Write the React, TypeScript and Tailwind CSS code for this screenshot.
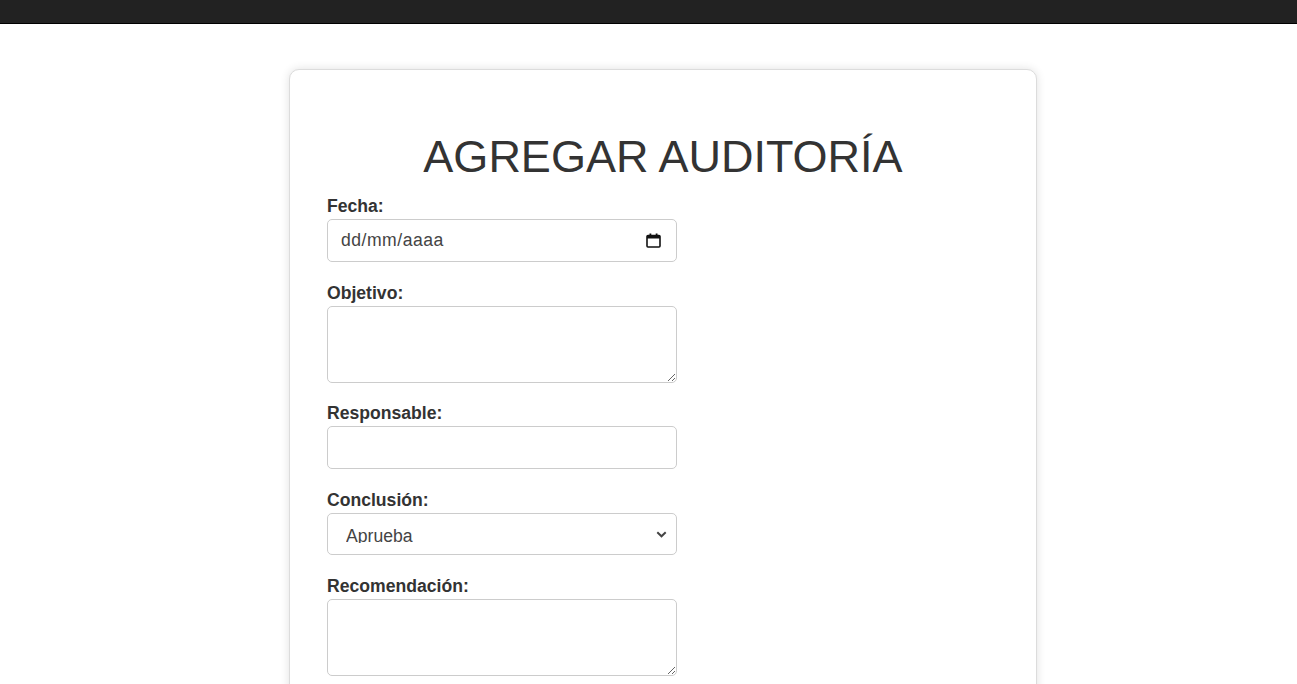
import React from 'react';

const font = { fontFamily: '"Liberation Sans", Arial, sans-serif' };

function Field({ label, children, tight }: { label: string; children: React.ReactNode; tight?: boolean }) {
  return (
    <div className={tight ? 'mb-[20px]' : 'mb-[21px]'}>
      <label className="block text-[17.6px] leading-[20px] font-bold text-[#333] mb-[3px]">{label}</label>
      {children}
    </div>
  );
}

export default function App() {
  return (
    <div className="min-h-screen bg-white" style={font}>
      <div className="h-[24px] bg-[#222] border-b border-black" />
      <div className="pt-[45px] pl-[29px] flex justify-center">
        <div className="w-[748px] bg-white border border-[#dcdcdc] rounded-[10px] shadow-[0_0_10px_rgba(0,0,0,0.12)] px-[37px] pt-[61px] pb-10">
          <h1 className="text-center text-[45px] leading-[52px] font-normal text-[#333] mb-[13px]">
            AGREGAR AUDITORÍA
          </h1>
          <form>
            <Field label="Fecha:">
              <div className="relative w-[350px]">
                <input
                  type="text"
                  placeholder="dd/mm/aaaa"
                  className="w-[350px] h-[43px] border border-[#ccc] rounded-[5px] pl-[13px] pr-10 text-[17.6px] tracking-[0.5px] text-[#333] placeholder:text-[#444] outline-none"
                />
                <svg className="absolute right-[16px] top-[14px]" width="15" height="15" viewBox="0 0 15 15" fill="none">
                  <rect x="1" y="2.5" width="13" height="11.5" rx="1" stroke="#111" strokeWidth="1.6" />
                  <rect x="1" y="2.5" width="13" height="3" fill="#111" />
                  <rect x="3.5" y="0.5" width="1.8" height="3" fill="#111" />
                  <rect x="9.7" y="0.5" width="1.8" height="3" fill="#111" />
                </svg>
              </div>
            </Field>
            <Field label="Objetivo:" tight>
              <textarea className="block w-[350px] h-[77px] border border-[#ccc] rounded-[5px] p-3 text-[17.6px] outline-none" />
            </Field>
            <Field label="Responsable:">
              <input
                type="text"
                className="block w-[350px] h-[43px] border border-[#ccc] rounded-[5px] px-3 text-[17.6px] outline-none"
              />
            </Field>
            <Field label="Conclusión:">
              <div
                role="combobox"
                className="relative w-[350px] h-[42px] border border-[#ccc] rounded-[5px] pl-[18px] pr-10 pt-3 bg-white"
              >
                <div className="h-[17px] overflow-hidden text-[17.6px] leading-[20px] text-[#444]">Aprueba</div>
                <svg className="absolute right-[9px] top-[17px] pointer-events-none" width="11" height="7" viewBox="0 0 11 7" fill="none">
                  <path d="M1.3 1.3L5.5 5.3L9.7 1.3" stroke="#444" strokeWidth="2" />
                </svg>
              </div>
            </Field>
            <Field label="Recomendación:" tight>
              <textarea className="block w-[350px] h-[77px] border border-[#ccc] rounded-[5px] p-3 text-[17.6px] outline-none" />
            </Field>
          </form>
        </div>
      </div>
    </div>
  );
}
